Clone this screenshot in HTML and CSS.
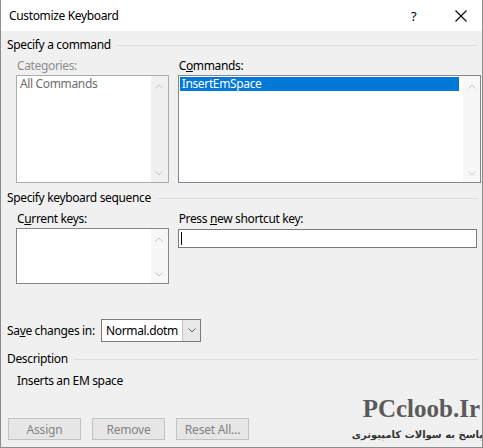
FILE: index.html
```html
<!DOCTYPE html>
<html lang="en">
<head>
    <meta charset="UTF-8">
    <title>Customize Keyboard</title>
    <link rel="stylesheet" href="styles.css">
</head>
<body>
    <div class="dialog">
        <div class="titlebar">
            <span class="title">Customize Keyboard</span>
            <span class="help">?</span>
            <span class="close">
                <svg width="12" height="12" viewBox="0 0 12 12"><path d="M0.5 0.5 L11.5 11.5 M11.5 0.5 L0.5 11.5" stroke="#000" stroke-width="1.1" fill="none"/></svg>
            </span>
        </div>

        <div class="content">
            <div class="group-head head-command"><span>Specify a command</span><i class="rule"></i></div>
            <div class="pair">
                <div class="field narrow">
                    <div class="label disabled">Categories:</div>
                    <div class="listbox off tall">
                        <div class="items"><div class="item">All Commands</div></div>
                        <div class="scroll">
                            <svg class="chev" width="8" height="5" viewBox="0 0 8 5"><path d="M0.5 4.5 L4 1 L7.5 4.5" stroke="#c4c4c4" fill="none"/></svg>
                            <svg class="chev" width="8" height="5" viewBox="0 0 8 5"><path d="M0.5 0.5 L4 4 L7.5 0.5" stroke="#c4c4c4" fill="none"/></svg>
                        </div>
                    </div>
                </div>
                <div class="field wide">
                    <div class="label">C<u>o</u>mmands:</div>
                    <div class="listbox tall">
                        <div class="items"><div class="item selected">InsertEmSpace</div></div>
                        <div class="scroll">
                            <svg class="chev" width="8" height="5" viewBox="0 0 8 5"><path d="M0.5 4.5 L4 1 L7.5 4.5" stroke="#c4c4c4" fill="none"/></svg>
                            <svg class="chev" width="8" height="5" viewBox="0 0 8 5"><path d="M0.5 0.5 L4 4 L7.5 0.5" stroke="#c4c4c4" fill="none"/></svg>
                        </div>
                    </div>
                </div>
            </div>

            <div class="group-head head-keys"><span>Specify keyboard sequence</span><i class="rule"></i></div>
            <div class="pair">
                <div class="field narrow">
                    <div class="label">C<u>u</u>rrent keys:</div>
                    <div class="listbox short">
                        <div class="items"></div>
                        <div class="scroll">
                            <svg class="chev" width="8" height="5" viewBox="0 0 8 5"><path d="M0.5 4.5 L4 1 L7.5 4.5" stroke="#c4c4c4" fill="none"/></svg>
                            <svg class="chev" width="8" height="5" viewBox="0 0 8 5"><path d="M0.5 0.5 L4 4 L7.5 0.5" stroke="#c4c4c4" fill="none"/></svg>
                        </div>
                    </div>
                </div>
                <div class="field wide">
                    <div class="label">Press <u>n</u>ew shortcut key:</div>
                    <div class="textbox"><i class="caret"></i></div>
                </div>
            </div>

            <div class="save-row">
                <span class="save-label">Sa<u>v</u>e changes in:</span>
                <div class="combo">
                    <span class="combo-text">Normal.dotm</span>
                    <span class="combo-btn">
                        <svg width="8" height="5" viewBox="0 0 8 5"><path d="M0.5 0.5 L4 4 L7.5 0.5" stroke="#606060" fill="none"/></svg>
                    </span>
                </div>
            </div>

            <div class="group-head head-desc"><span>Description</span><i class="rule"></i></div>
            <div class="desc">Inserts an EM space</div>

            <div class="buttons">
                <button class="btn">Assign</button>
                <button class="btn">Remove</button>
                <button class="btn">Reset All...</button>
            </div>
        </div>

        <div class="watermark">
            <div class="wm-name">PCcloob.Ir</div>
            <div class="wm-sub" dir="rtl">پاسخ به سوالات کامپیوتری</div>
        </div>
    </div>
</body>
</html>
```

FILE: styles.css
```css
body {
    margin: 0;
    background: #f0f0f0;
    font-family: "Noto Sans", "Open Sans", sans-serif;
    font-size: 12px;
    letter-spacing: -0.35px;
    color: #000;
}

.dialog {
    position: relative;
    width: 483px;
    height: 448px;
    box-sizing: border-box;
    border: 1px solid #8c8c8c;
    border-top: none;
    background: #f0f0f0;
    overflow: hidden;
}

.titlebar {
    height: 31px;
    background: #fff;
    display: flex;
    align-items: center;
}

.title {
    margin-left: 8px;
    flex: 1;
    font-size: 12px;
}

.help {
    width: 12px;
    margin-right: 32px;
    font-size: 13px;
}

.close {
    display: flex;
    margin-right: 15px;
}

.content {
    padding: 0 1px 0 6px;
}

.group-head {
    display: flex;
    align-items: center;
    height: 16px;
    line-height: 16px;
}

.rule {
    flex: 1;
    height: 1px;
    margin: 0 3px 0 6px;
    background: #dcdcdc;
}

.head-command {
    margin-top: 6px;
}

.head-keys {
    margin-top: 7px;
}

.head-desc {
    margin-top: 9px;
}

.pair {
    display: flex;
    gap: 9px;
    margin-left: 9px;
}

.narrow {
    width: 153px;
}

.wide {
    width: 304px;
}

.label {
    height: 16px;
    line-height: 16px;
    padding-left: 1px;
    margin-top: 5px;
    margin-bottom: 1px;
}

.label.disabled {
    color: #8d8d8d;
}

.listbox {
    display: flex;
    box-sizing: border-box;
    border: 1px solid #828790;
    background: #fff;
}

.listbox.off {
    border-color: #adadad;
}

.tall {
    height: 108px;
}

.short {
    height: 56px;
    margin-top: 1px;
}

.items {
    flex: 1;
    padding: 1px 0 0 1px;
}

.item {
    height: 14px;
    line-height: 14px;
    padding-left: 2px;
    color: #6d6d6d;
}

.item.selected {
    background: #0078d7;
    color: #fff;
    margin-right: 4px;
}

.scroll {
    width: 17px;
    background: #f7f7f7;
    display: flex;
    flex-direction: column;
    justify-content: space-between;
    align-items: center;
    padding: 8px 0 6px;
}

.off .scroll {
    background: #f0f0f0;
}

.textbox {
    box-sizing: border-box;
    height: 19px;
    width: 299px;
    margin-top: 2px;
    border: 1px solid #7a7a7a;
    background: #fff;
    padding: 2px 0 0 2px;
}

.caret {
    display: block;
    width: 1px;
    height: 13px;
    background: #000;
}

.save-row {
    display: flex;
    align-items: center;
    margin-top: 35px;
    height: 23px;
}

.save-label {
    width: 94px;
}

.combo {
    display: flex;
    box-sizing: border-box;
    height: 23px;
    width: 100px;
    border: 1px solid #7a7a7a;
    background: #fff;
}

.combo-text {
    flex: 1;
    line-height: 21px;
    padding-left: 4px;
}

.combo-btn {
    width: 17px;
    display: flex;
    align-items: center;
    justify-content: center;
    background: #e8e8e8;
    border-left: 1px solid #c4c4c4;
}

.desc {
    margin: 6px 0 0 10px;
    height: 16px;
    line-height: 16px;
}

.buttons {
    display: flex;
    gap: 11px;
    margin: 29px 0 0 1px;
}

.btn {
    width: 73px;
    height: 22px;
    padding: 0;
    font-family: "Noto Sans", "Open Sans", sans-serif;
    font-size: 12px;
    letter-spacing: -0.2px;
    color: #838383;
    background: #e6e6e6;
    border: 1px solid #c2c2c2;
}

.watermark {
    position: absolute;
    right: -1px;
    bottom: -1px;
    width: 126px;
    height: 44px;
    background: #f0f0f0;
    letter-spacing: 0;
}

.wm-name {
    margin-top: -11px;
    padding-right: 3px;
    font-family: "Liberation Serif", serif;
    font-weight: bold;
    font-size: 25px;
    line-height: 32px;
    color: #5a5a5a;
    text-align: right;
    white-space: nowrap;
}

.wm-sub {
    font-family: "DejaVu Sans", sans-serif;
    font-weight: bold;
    font-size: 10px;
    line-height: 20px;
    color: #333;
    text-align: right;
    white-space: nowrap;
}
```
